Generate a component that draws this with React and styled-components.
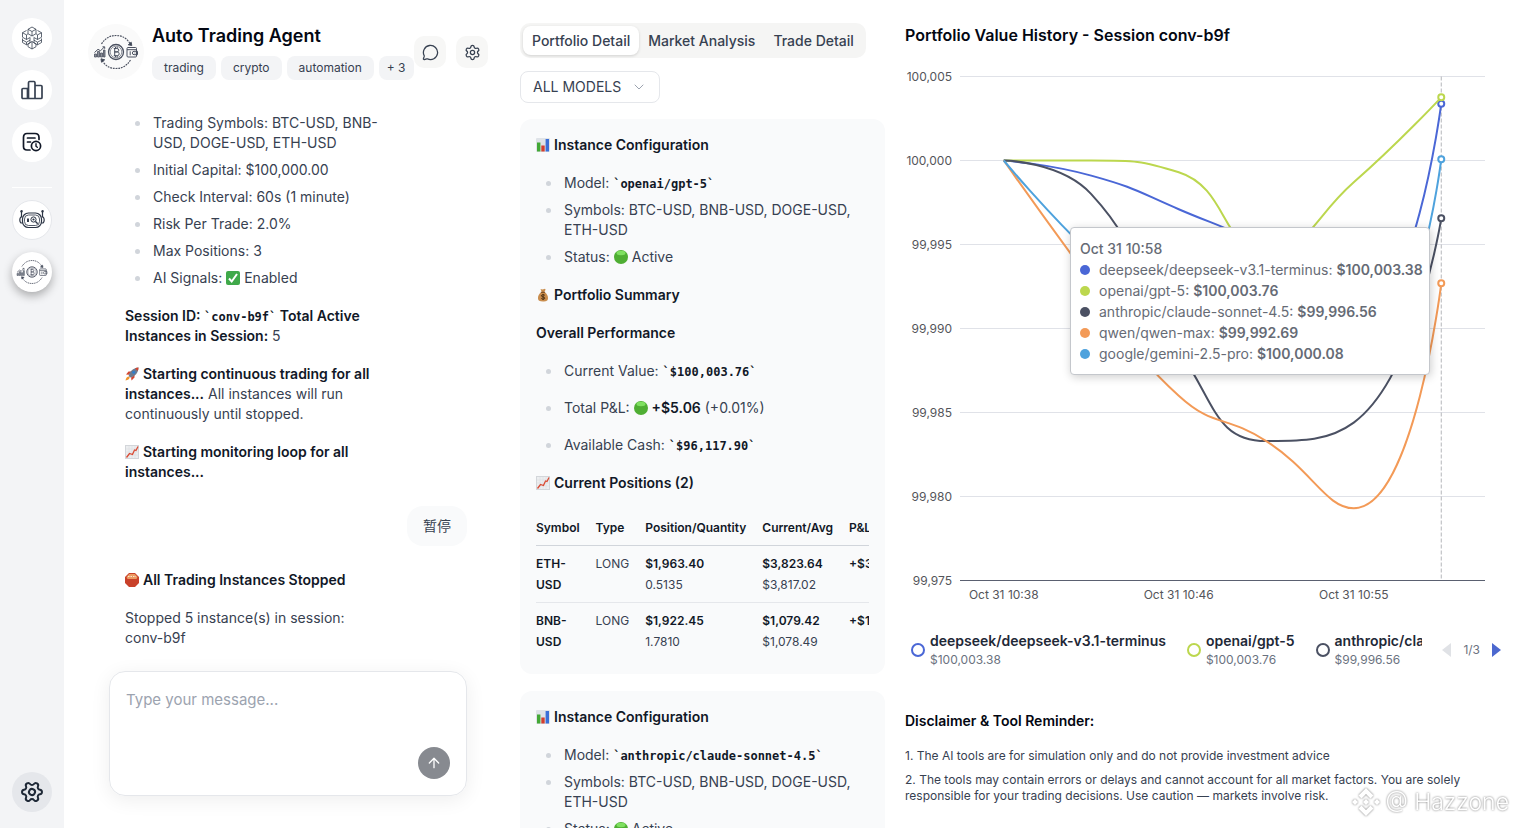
import { ArrowUp, ChevronDown, MessageCircle, Settings } from 'lucide-react';
import React, { useState } from 'react';
import styled, { createGlobalStyle } from 'styled-components';

const GlobalStyle = createGlobalStyle`
  * {
    box-sizing: border-box;
  }
  body {
    margin: 0;
    background: #ffffff;
    color: #374151;
    font-family: Inter, 'Noto Sans CJK SC', sans-serif;
    font-size: 14px;
    line-height: 20px;
  }
  button, select, textarea {
    font-family: inherit;
    color: inherit;
  }
  h1, h2, h3, p, ul {
    margin: 0;
    padding: 0;
  }
`;

const Page = styled.div`
  display: flex;
  height: 100vh;
  overflow: hidden;
`;

const Sidebar = styled.nav`
  display: flex;
  flex-direction: column;
  align-items: center;
  flex: none;
  width: 64px;
  padding: 18px 0 16px;
  background: #f3f4f6;
`;

const NavGroup = styled.div`
  display: flex;
  flex-direction: column;
  gap: 12px;
`;

const NavButton = styled.button`
  display: flex;
  align-items: center;
  justify-content: center;
  width: 40px;
  height: 40px;
  padding: 0;
  border: 1px solid ${(p) => p.$border || 'transparent'};
  border-radius: 50%;
  color: #1f2937;
  background: ${(p) => p.$background || '#ffffff'};
  box-shadow: ${(p) => (p.$active ? '0 4px 10px rgba(0, 0, 0, 0.3)' : 'none')};
`;

const NavCog = styled(Settings)`
  transform: rotate(30deg);
`;

const NavDivider = styled.hr`
  width: 40px;
  height: 1px;
  margin: 25px 0 12px;
  border: 0;
  background: #ffffff;
`;

const NavSpacer = styled.div`
  flex: 1;
`;

const Columns = styled.main`
  display: grid;
  flex: 1;
  grid-template-columns: minmax(0, 440fr) minmax(0, 381fr) minmax(0, 632fr);
  min-width: 0;
`;

const ChatColumn = styled.section`
  display: flex;
  flex-direction: column;
  min-height: 0;
`;

const ChatHeader = styled.header`
  display: flex;
  align-items: center;
  justify-content: space-between;
  padding: 24px 16px 0 24px;
`;

const AgentInfo = styled.div`
  display: flex;
  align-items: center;
  gap: 8px;
`;

const Avatar = styled.div`
  display: flex;
  align-items: center;
  justify-content: center;
  width: 56px;
  height: 56px;
  border-radius: 50%;
  background: #fafafa;
`;

const AgentName = styled.h1`
  color: #030712;
  font-size: 18px;
  font-weight: 600;
  line-height: 24px;
`;

const Tags = styled.div`
  display: flex;
  gap: 5px;
  margin-top: 8px;
`;

const Tag = styled.span`
  padding: 4px ${(p) => (p.$small ? '8px' : '12px')};
  border-radius: 8px;
  background: #f3f4f6;
  font-size: 12px;
  line-height: 16px;
  white-space: nowrap;
`;

const HeaderActions = styled.div`
  display: flex;
  gap: 10px;
`;

const IconButton = styled.button`
  display: flex;
  align-items: center;
  justify-content: center;
  width: 32px;
  height: 32px;
  padding: 0;
  border: 0;
  border-radius: 10px;
  background: #f7f7f6;
`;

const Messages = styled.div`
  flex: 1;
  min-height: 0;
  padding: 33px 37px 0 61px;
  overflow: hidden;
`;

const Markdown = styled.div`
  max-width: 254px;
`;

const Bullets = styled.ul`
  display: flex;
  flex-direction: column;
  gap: ${(p) => (p.$loose ? '17px' : '7px')};
  padding-left: 28px;
  list-style: none;
`;

const Bullet = styled.li`
  position: relative;
  &::before {
    content: '';
    position: absolute;
    top: 8px;
    left: -18px;
    width: 5px;
    height: 5px;
    border-radius: 50%;
    background: #d1d5db;
  }
`;

const Paragraph = styled.p`
  margin: 18px 0;
`;

const Strong = styled.strong`
  color: #111827;
  font-weight: 600;
`;

const Code = styled.code`
  color: #111827;
  font-family: 'DejaVu Sans Mono', monospace;
  font-size: 12px;
  font-weight: 700;
  line-height: 16px;
`;

const Emoji = styled.svg`
  width: 14px;
  height: 14px;
  margin-right: 4px;
  vertical-align: -2px;
`;

const UserMessage = styled.div`
  display: flex;
  justify-content: flex-end;
  margin: 24px 0;
`;

const Bubble = styled.div`
  padding: 10px 16px;
  border-radius: 16px;
  background: #f9fafb;
`;

const Composer = styled.form`
  display: flex;
  flex-direction: column;
  height: 125px;
  margin: 16px 37px 32px 45px;
  padding: 16px;
  border: 1px solid #e5e7eb;
  border-radius: 16px;
  box-shadow: 0 4px 20px rgba(0, 0, 0, 0.07);
`;

const ComposerInput = styled.textarea`
  flex: 1;
  width: 100%;
  padding: 0;
  border: 0;
  outline: none;
  resize: none;
  background: transparent;
  font-size: 15px;
  line-height: 24px;
  &::placeholder {
    color: #9ca3af;
  }
`;

const SendButton = styled.button`
  display: flex;
  align-items: center;
  align-self: flex-end;
  justify-content: center;
  width: 32px;
  height: 32px;
  padding: 0;
  border: 0;
  border-radius: 50%;
  color: #ffffff;
  background: #878a90;
`;

const DetailColumn = styled.section`
  display: flex;
  flex-direction: column;
  align-items: flex-start;
  min-height: 0;
  padding: 23px 0 0 16px;
  overflow: hidden;
`;

const TabList = styled.div`
  display: flex;
  flex: none;
  padding: 3px;
  border-radius: 10px;
  background: #f5f5f4;
`;

const Tab = styled.button`
  padding: 4px 9px;
  border: 0;
  border-radius: 8px;
  background: ${(p) => (p.$active ? '#ffffff' : 'transparent')};
  box-shadow: ${(p) => (p.$active ? '0 1px 3px rgba(0, 0, 0, 0.15)' : 'none')};
  font-size: 14px;
  font-weight: 500;
  line-height: 21px;
  white-space: nowrap;
`;

const SelectBox = styled.label`
  display: flex;
  flex: none;
  align-items: center;
  gap: 6px;
  height: 32px;
  margin: 13px 0 16px;
  padding: 0 12px;
  border: 1px solid #e5e7eb;
  border-radius: 8px;
  color: #9ca3af;
`;

const ModelSelect = styled.select`
  width: 92px;
  padding: 0;
  border: 0;
  outline: none;
  appearance: none;
  background: transparent;
  color: #374151;
  font-size: 14px;
  line-height: 20px;
`;

const Card = styled.article`
  flex: none;
  width: 100%;
  margin-bottom: 17px;
  padding: 16px 16px 14px;
  border-radius: 12px;
  background: #f9fafb;
`;

const CardHeading = styled.h3`
  margin: 18px 0;
  color: #111827;
  font-size: 14px;
  font-weight: 600;
  line-height: 20px;
  &:first-child {
    margin-top: 0;
  }
`;

const TableScroll = styled.div`
  margin-top: 24px;
  overflow: hidden;
`;

const Table = styled.table`
  border-collapse: collapse;
  font-size: 12px;
  line-height: 21px;
`;

const HeadCell = styled.th`
  padding: 0 8px 7px;
  border-bottom: 1px solid #d1d5db;
  color: #111827;
  font-weight: 600;
  text-align: left;
  white-space: nowrap;
  &:first-child {
    padding-left: 0;
  }
`;

const Cell = styled.td`
  padding: 7px 8px;
  border-bottom: 1px solid ${(p) => (p.$last ? 'transparent' : '#e5e7eb')};
  vertical-align: top;
  &:first-child {
    padding-left: 0;
  }
`;

const ChartColumn = styled.section`
  position: relative;
  min-width: 0;
  padding: 23px 16px 0 20px;
  overflow: hidden;
`;

const ChartTitle = styled.h2`
  color: #030712;
  font-size: 16px;
  font-weight: 600;
  line-height: 24px;
`;

const ChartArea = styled.div`
  position: relative;
  margin-top: 16px;
`;

const ChartSvg = styled.svg`
  display: block;
  width: 100%;
  overflow: visible;
`;

const AxisText = styled.text`
  fill: #54555a;
  font-size: 12px;
`;

const Tooltip = styled.div`
  position: absolute;
  top: 164px;
  left: 165px;
  display: flex;
  flex-direction: column;
  padding: 10px 6px 10px 9px;
  border: 1px solid #c4c7cc;
  border-radius: 4px;
  background: #ffffff;
  box-shadow: 1px 2px 10px rgba(0, 0, 0, 0.2);
  color: #666b75;
  font-size: 14px;
  line-height: 21px;
  white-space: nowrap;
`;

const TooltipRow = styled.div`
  display: flex;
  align-items: center;
`;

const Dot = styled.span`
  width: 10px;
  height: 10px;
  margin-right: 9px;
  border-radius: 50%;
  background: ${(p) => p.$color};
`;

const TooltipValue = styled.b`
  margin-left: 4px;
  font-weight: 600;
`;

const TooltipDate = styled.div`
  font-weight: 500;
`;

const Legend = styled.div`
  display: flex;
  align-items: center;
  gap: 20px;
  margin-top: 24px;
  padding-left: 6px;
`;

const LegendItems = styled.div`
  display: flex;
  flex: 1;
  gap: 21px;
  min-width: 0;
  overflow: hidden;
`;

const LegendItem = styled.div`
  display: flex;
  flex: none;
  align-items: center;
  gap: 5px;
`;

const LegendRing = styled.span`
  width: 14px;
  height: 14px;
  border: 2px solid ${(p) => p.$color};
  border-radius: 50%;
`;

const LegendName = styled.div`
  color: #1f2937;
  font-size: 14px;
  font-weight: 600;
  line-height: 20px;
`;

const LegendValue = styled.div`
  color: #6b7280;
  font-size: 12px;
  line-height: 18px;
`;

const Pager = styled.div`
  display: flex;
  align-items: center;
  gap: 12px;
  color: #6b7280;
  font-size: 12px;
`;

const PagerButton = styled.button`
  display: flex;
  padding: 0;
  border: 0;
  background: none;
  color: ${(p) => (p.disabled ? '#e0e2e6' : '#4c68cf')};
`;

const Disclaimer = styled.footer`
  margin-top: 42px;
  font-size: 12px;
  line-height: 16px;
`;

const DisclaimerTitle = styled.h3`
  margin-bottom: 17px;
  color: #030712;
  font-size: 14px;
  font-weight: 600;
  line-height: 20px;
`;

const DisclaimerLine = styled.p`
  margin-bottom: 8px;
`;

const Watermark = styled.div`
  position: absolute;
  right: 8px;
  bottom: 11px;
  display: flex;
  align-items: center;
  gap: 5px;
  color: #ffffff;
  filter: drop-shadow(0 0 1px rgba(0, 0, 0, 0.55));
  font-size: 23px;
  font-weight: 300;
  line-height: 30px;
`;

const series = [
  {
    name: 'deepseek/deepseek-v3.1-terminus',
    color: '#4a67d6',
    values: [100000, 99999.1, 99997.1, 99994.6, 99990.4, 100003.38],
  },
  {
    name: 'openai/gpt-5',
    color: '#bcd74e',
    values: [100000, 100000, 99999.3, 99994.6, 99998.7, 100003.76],
  },
  {
    name: 'anthropic/claude-sonnet-4.5',
    color: '#4b5163',
    values: [100000, 99998, 99988.7, 99983.3, 99984.4, 99996.56],
  },
  {
    name: 'qwen/qwen-max',
    color: '#f39a57',
    values: [100000, 99992.8, 99986, 99983.3, 99979.3, 99992.69],
  },
  {
    name: 'google/gemini-2.5-pro',
    color: '#4ea2dd',
    values: [100000, 99994.4, 99990, 99988, 99988, 100000.08],
  },
];

const money = (value) =>
  `$${value.toLocaleString('en-US', { minimumFractionDigits: 2 })}`;

const plot = { left: 55, right: 580, top: 13.5, bottom: 517.5 };
const ticks = [100005, 100000, 99995, 99990, 99985, 99980, 99975];
const labels = ['Oct 31 10:38', 'Oct 31 10:46', 'Oct 31 10:55'];

const xAt = (i) => plot.left + ((plot.right - plot.left) / 6) * (i + 0.5);
const yAt = (v) =>
  plot.top + ((100005 - v) / 30) * (plot.bottom - plot.top);

const clamp = (v, a, b) => Math.max(Math.min(a, b), Math.min(Math.max(a, b), v));

// bezier through all points, control points never leave the box of a segment
const smoothPath = (points) => {
  let d = `M${points[0][0]} ${points[0][1]}`;
  let out = points[0];
  for (let i = 1; i < points.length; i++) {
    const prev = points[i - 1];
    const cur = points[i];
    const next = points[i + 1];
    let cpIn = cur;
    let nextOut = cur;
    if (next) {
      const lenPrev = Math.hypot(cur[0] - prev[0], cur[1] - prev[1]);
      const lenNext = Math.hypot(next[0] - cur[0], next[1] - cur[1]);
      const ratio = lenNext / (lenNext + lenPrev);
      nextOut = cur.map((c, k) =>
        clamp(c + (next[k] - prev[k]) * 0.5 * ratio, c, next[k])
      );
      cpIn = cur.map((c, k) =>
        clamp(c - ((nextOut[k] - c) * lenPrev) / lenNext, prev[k], c)
      );
      nextOut = cur.map((c, k) => c + ((c - cpIn[k]) * lenNext) / lenPrev);
    }
    d += `C${out.join(' ')} ${cpIn.join(' ')} ${cur.join(' ')}`;
    out = nextOut;
  }
  return d;
};

const BarsEmoji = () => (
  <Emoji viewBox="0 0 14 14" role="img" aria-label="bar chart">
    <rect width="14" height="14" rx="1" fill="#dfe3e8" />
    <rect x="1" y="4.5" width="3.400" height="9" fill="#43a835" />
    <rect x="5.300" y="7.5" width="3.400" height="6" fill="#d23f2f" />
    <rect x="9.600" y="1" width="3.400" height="12.500" fill="#3a6fd8" />
  </Emoji>
);

const TrendEmoji = () => (
  <Emoji viewBox="0 0 14 14" role="img" aria-label="chart rising">
    <rect x="0.5" y="0.5" width="13" height="13" fill="#eceef0" stroke="#d3d6da" />
    <path d="M4 1v12M7 1v12M10 1v12M1 4h12M1 7h12M1 10h12" stroke="#d8dbdf" strokeWidth="0.5" />
    <path d="M1.5 12.5L4.5 8.5l3 1L9.5 5l1.500 .5L13 1.500" fill="none" stroke="#d94a33" strokeWidth="1.3" />
  </Emoji>
);

const CheckEmoji = () => (
  <Emoji viewBox="0 0 14 14" role="img" aria-label="enabled">
    <rect width="14" height="14" rx="2" fill="#3fa94a" />
    <path d="M3 7.500l2.700 3L11 3" fill="none" stroke="#fff" strokeWidth="2" />
  </Emoji>
);

const GreenEmoji = () => (
  <Emoji viewBox="0 0 14 14" role="img" aria-label="green">
    <circle cx="7" cy="7" r="7" fill="#4fae33" />
    <ellipse cx="7" cy="3" rx="4.500" ry="2.200" fill="#7fe060" />
  </Emoji>
);

const BagEmoji = () => (
  <Emoji viewBox="0 0 14 14" role="img" aria-label="money bag">
    <path d="M4.500 1l2 .6L9 .8l.6 1-1.300 2.200C11 5.500 12.300 8 12 10.500c-.3 2.200-1.500 3-5 3s-4.800-.8-5-3C1.700 8 3 5.500 5.700 4z" fill="#c98d4d" />
    <path d="M4.800 4.300h4.300" stroke="#6e4420" strokeWidth="1" />
    <path d="M8.800 7.300c-.8-1-3.400-.8-3.400.5 0 1.500 3.400.8 3.400 2.300 0 1.300-2.700 1.500-3.500.3M7.100 6v6" fill="none" stroke="#4a3015" strokeWidth="1" />
  </Emoji>
);

const RocketEmoji = () => (
  <Emoji viewBox="0 0 14 14" role="img" aria-label="rocket">
    <path d="M4 9.500c-2 0-3 1.500-3.500 4 2.500-.3 4-1.500 4.200-3.200z" fill="#f0952c" />
    <path d="M6.500 4.500H3.500L1 7.500l3 .3zM9.500 7.500v3l-3 3-.4-3z" fill="#d4452f" />
    <path d="M3.700 9c1-4.500 4-8 9.800-8.500C13.300 6 10 9.500 5.200 10.500z" fill="#6d7b8f" />
    <path d="M10 1.500c1-.6 2.200-.9 3.500-1 0 1.300-.3 2.500-.8 3.500z" fill="#d4452f" />
    <circle cx="8.700" cy="5.200" r="1.500" fill="#2f7fd0" />
  </Emoji>
);

const StopEmoji = () => (
  <Emoji viewBox="0 0 14 14" role="img" aria-label="stop">
    <path d="M4 0h6l4 4v6l-4 4H4l-4-4V4z" fill="#c9412a" />
    <path d="M4.200 1h5.600L12.500 4l-1 2h-9l-1-2z" fill="#eb9b62" />
    <path d="M3 3.500h8" stroke="#fbe3cf" strokeWidth="1" strokeDasharray="1.500 1" />
  </Emoji>
);

const LogoIcon = () => (
  <svg width="22" height="24" viewBox="0 0 22 24" fill="none" stroke="#374151" strokeWidth="0.8" strokeLinejoin="round">
    <path d="M11 1l4 2.300v4.400L11 10 7 7.700V3.300zM11 10V5.500M7 3.300l4 2.200 4-2.200" />
    <path d="M5.500 4.500l-4 2.200v4.500l4 2.300 4-2.300M1.500 6.700l4 2.200 1.500-1.200M5.500 8.900v4.600M16.500 4.500l4 2.200v4.500l-4 2.300-4-2.300M20.500 6.700l-4 2.200-1.500-1.200M16.500 8.900v4.600" />
    <path d="M1.500 12.500v4l4 2.300 3.500-2V12M20.500 12.500v4l-4 2.300-3.500-2V12M1.500 14l4 2.200 3.500-2M20.500 14l-4 2.200-3.500-2M5.500 16.200v2.600M16.500 16.200v2.600" />
    <path d="M7 18v2.700L11 23l4-2.300V18M11 15.500L7 18M11 15.500l4 2.500M11 15.500V23" />
  </svg>
);

const RankIcon = () => (
  <svg width="22" height="20" viewBox="0 0 22 20" fill="none" stroke="#374151" strokeWidth="1.700" strokeLinejoin="round">
    <path d="M1 9.500q0-1 1-1h4.500v10H2q-1 0-1-1zM7.500 18.500v-15q0-2 1-2h4.500q1 0 1 2v15zM14 5.500h6q1 0 1 1v11q0 1-1 1h-6M1 18.500h20" />
  </svg>
);

const HistoryIcon = () => (
  <svg width="20" height="20" viewBox="0 0 20 20" fill="none" stroke="#111827" strokeWidth="1.700" strokeLinecap="round">
    <path d="M8 18H5q-3.500 0-3.500-3.500v-9Q1.500 1.500 5 1.500h8q4 0 4 4v2M5.500 6h7.500M5.500 10h3" />
    <circle cx="14" cy="14" r="4.600" />
    <path d="M14 11.800v2.400l1.300 1" strokeWidth="1.400" />
  </svg>
);

const RobotIcon = () => (
  <svg width="26" height="20" viewBox="0 0 26 20" fill="none" stroke="#2b3444" strokeWidth="1.200">
    <rect x="3.500" y="3" width="19" height="14.500" rx="6" />
    <rect x="5.500" y="5" width="15" height="10.500" rx="4" strokeWidth="0.800" />
    <path d="M3.500 7H2Q.8 8 .8 10T2 13h1.500M22.500 7H24q1.200 1 1.200 3T24 13h-1.500M2.500 7V1.500M23.500 7V1.500" />
    <circle cx="2.500" cy="1.300" r="0.700" />
    <circle cx="23.500" cy="1.300" r="0.700" />
    <path d="M9 8.500v3.500" strokeWidth="1.900" />
    <circle cx="14.500" cy="9.500" r="2.600" strokeWidth="1" />
    <path d="M16.500 11.500l2.200 2.200" strokeWidth="1.400" />
    <circle cx="14.500" cy="9.500" r="0.500" />
  </svg>
);

const TradingIcon = ({ size }) => (
  <svg width={size} height={size} viewBox="0 0 46 46" fill="none" stroke="#4b5160" strokeWidth="1">
    <circle cx="23" cy="23" r="7.500" strokeWidth="1.300" />
    <circle cx="23" cy="23" r="5.800" strokeWidth="0.600" />
    <path d="M20.800 19.500h3q2 0 2 1.700t-2 1.700h-2.300 2.700q2 0 2 1.900t-2 1.900h-3.400M21.700 19.500v7.200M22.500 18v1.500M24.200 18v1.500M22.500 26.700v1.500M24.200 26.700v1.500" />
    <path d="M8.500 15C12.500 9 17 6.500 23 6.500S33.500 9 37 14.500M37.500 31C33.500 37 29 39.500 23 39.500S12.500 37 9.500 32" strokeWidth="1.200" strokeDasharray="1.800 0.900" />
    <path d="M38.800 16.500l-3.600-.7 3-2.600zM8 29.800l3.700 1-3.200 2.400z" fill="#374151" />
    <path d="M1.500 28v-3h2v3zM4.500 28v-5.500h2V28zM7.500 28v-4h2v4zM10.500 28v-7h1.500v7z" fill="#8b9099" strokeWidth="0.800" />
    <path d="M1.500 23.500l3.500-3.200 2.500 1.500 3.800-3.800M9.500 17.800h2.200v2" />
    <rect x="34" y="18.500" width="9.500" height="9.500" rx="1" />
    <path d="M34 20.700h9.500M44.500 22.300h-3.500q-1.600 0-1.600 1.700t1.600 1.700h3.500z" />
    <path d="M41.500 24h.9M37.200 22.300v4" />
  </svg>
);

const ChainMark = () => (
  <svg width="28" height="28" viewBox="0 0 28 28" fill="currentColor">
    <path d="M14 0l7.500 7.500-3 3L14 6l-4.500 4.500-3-3zM3 11l3 3-3 3-3-3zM14 11l3 3-3 3-3-3zM25 11l3 3-3 3-3-3zM14 28l-7.500-7.500 3-3L14 22l4.500-4.500 3 3z" />
  </svg>
);

const positions = [
  { symbol: 'ETH-USD', value: '$1,963.40', quantity: '0.5135', current: '$3,823.64', avg: '$3,817.02', pnl: '+$3.34' },
  { symbol: 'BNB-USD', value: '$1,922.45', quantity: '1.7810', current: '$1,079.42', avg: '$1,078.49', pnl: '+$1.66' },
];

const PositionRow = ({ symbol, value, quantity, current, avg, pnl, last }) => (
  <tr>
    <Cell $last={last}>
      <Strong>{symbol}</Strong>
    </Cell>
    <Cell $last={last}>LONG</Cell>
    <Cell $last={last}>
      <Strong>{value}</Strong>
      <br />
      {quantity}
    </Cell>
    <Cell $last={last}>
      <Strong>{current}</Strong>
      <br />
      {avg}
    </Cell>
    <Cell $last={last}>
      <Strong>{pnl}</Strong>
    </Cell>
  </tr>
);

const InstanceInfo = ({ model }) => (
  <>
    <CardHeading>
      <BarsEmoji />
      Instance Configuration
    </CardHeading>
    <Bullets>
      <Bullet>
        Model: <Code>`{model}`</Code>
      </Bullet>
      <Bullet>Symbols: BTC-USD, BNB-USD, DOGE-USD, ETH-USD</Bullet>
      <Bullet>
        Status: <GreenEmoji />
        Active
      </Bullet>
    </Bullets>
  </>
);

const Chart = () => (
  <ChartArea>
    <ChartSvg viewBox="0 0 596 544">
      {ticks.map((tick) => (
        <g key={tick}>
          <path
            d={`M${plot.left} ${yAt(tick)}H${plot.right}`}
            stroke={tick === 99975 ? '#5a6070' : '#e0e2e8'}
          />
          <AxisText x="47" y={yAt(tick) + 4} textAnchor="end">
            {tick.toLocaleString('en-US')}
          </AxisText>
        </g>
      ))}
      {labels.map((label, i) => (
        <AxisText key={label} x={xAt(i * 2)} y="536" textAnchor="middle">
          {label}
        </AxisText>
      ))}
      <path
        d={`M${xAt(5)} ${plot.top}V${plot.bottom}`}
        stroke="#b4b6bb"
        strokeDasharray="4 2"
      />
      {series.map(({ name, color, values }) => (
        <g key={name} fill="none" stroke={color} strokeWidth="2">
          <path d={smoothPath(values.map((v, i) => [xAt(i), yAt(v)]))} />
          <circle cx={xAt(5)} cy={yAt(values[5])} r="3" fill="#ffffff" />
        </g>
      ))}
    </ChartSvg>
    <Tooltip>
      <TooltipDate>Oct 31 10:58</TooltipDate>
      {series.map(({ name, color, values }) => (
        <TooltipRow key={name}>
          <Dot $color={color} />
          {name}: <TooltipValue>{money(values[5])}</TooltipValue>
        </TooltipRow>
      ))}
    </Tooltip>
  </ChartArea>
);

const tabs = ['Portfolio Detail', 'Market Analysis', 'Trade Detail'];

const App = () => {
  const [tab, setTab] = useState(tabs[0]);
  const [message, setMessage] = useState('');

  return (
    <Page>
      <GlobalStyle />
      <Sidebar>
        <NavGroup>
          <NavButton aria-label="Home"><LogoIcon /></NavButton>
          <NavButton aria-label="Ranking"><RankIcon /></NavButton>
          <NavButton aria-label="History"><HistoryIcon /></NavButton>
        </NavGroup>
        <NavDivider />
        <NavGroup>
          <NavButton aria-label="Research agent" $border="#e5e7eb"><RobotIcon /></NavButton>
          <NavButton aria-label="Trading agent" $active><TradingIcon size={32} /></NavButton>
        </NavGroup>
        <NavSpacer />
        <NavButton aria-label="Settings" $background="#e5e7eb">
          <NavCog size={24} strokeWidth={2} />
        </NavButton>
      </Sidebar>
      <Columns>
        <ChatColumn>
          <ChatHeader>
            <AgentInfo>
              <Avatar><TradingIcon size={46} /></Avatar>
              <div>
                <AgentName>Auto Trading Agent</AgentName>
                <Tags>
                  <Tag>trading</Tag>
                  <Tag>crypto</Tag>
                  <Tag>automation</Tag>
                  <Tag $small>+ 3</Tag>
                </Tags>
              </div>
            </AgentInfo>
            <HeaderActions>
              <IconButton aria-label="New chat"><MessageCircle size={17} strokeWidth={1.8} /></IconButton>
              <IconButton aria-label="Agent settings"><Settings size={17} strokeWidth={1.8} /></IconButton>
            </HeaderActions>
          </ChatHeader>
          <Messages>
            <Markdown>
              <Bullets>
                <Bullet>Trading Symbols: BTC-USD, BNB-USD, DOGE-USD, ETH-USD</Bullet>
                <Bullet>Initial Capital: $100,000.00</Bullet>
                <Bullet>Check Interval: 60s (1 minute)</Bullet>
                <Bullet>Risk Per Trade: 2.0%</Bullet>
                <Bullet>Max Positions: 3</Bullet>
                <Bullet>AI Signals: <CheckEmoji />Enabled</Bullet>
              </Bullets>
              <Paragraph>
                <Strong>Session ID: <Code>`conv-b9f`</Code> Total Active Instances in Session:</Strong> 5
              </Paragraph>
              <Paragraph>
                <RocketEmoji />
                <Strong>Starting continuous trading for all instances...</Strong> All
                instances will run continuously until stopped.
              </Paragraph>
              <Paragraph>
                <TrendEmoji />
                <Strong>Starting monitoring loop for all instances...</Strong>
              </Paragraph>
            </Markdown>
            <UserMessage>
              <Bubble>暂停</Bubble>
            </UserMessage>
            <Markdown>
              <Paragraph>
                <StopEmoji />
                <Strong>All Trading Instances Stopped</Strong>
              </Paragraph>
              <Paragraph>Stopped 5 instance(s) in session: conv-b9f</Paragraph>
            </Markdown>
          </Messages>
          <Composer onSubmit={(e) => e.preventDefault()}>
            <ComposerInput
              aria-label="Message"
              placeholder="Type your message..."
              value={message}
              onChange={(e) => setMessage(e.target.value)}
            />
            <SendButton aria-label="Send"><ArrowUp size={16} /></SendButton>
          </Composer>
        </ChatColumn>
        <DetailColumn>
          <TabList role="tablist">
            {tabs.map((name) => (
              <Tab
                key={name}
                role="tab"
                aria-selected={tab === name}
                $active={tab === name}
                onClick={() => setTab(name)}
              >
                {name}
              </Tab>
            ))}
          </TabList>
          <SelectBox>
            <ModelSelect aria-label="Model">
              <option>ALL MODELS</option>
            </ModelSelect>
            <ChevronDown size={16} strokeWidth={1.5} />
          </SelectBox>
          <Card>
            <InstanceInfo model="openai/gpt-5" />
            <CardHeading>
              <BagEmoji />
              Portfolio Summary
            </CardHeading>
            <CardHeading>Overall Performance</CardHeading>
            <Bullets $loose>
              <Bullet>Current Value: <Code>`$100,003.76`</Code></Bullet>
              <Bullet>
                Total P&amp;L: <GreenEmoji />
                <Strong>+$5.06</Strong> (+0.01%)
              </Bullet>
              <Bullet>Available Cash: <Code>`$96,117.90`</Code></Bullet>
            </Bullets>
            <CardHeading>
              <TrendEmoji />
              Current Positions (2)
            </CardHeading>
            <TableScroll>
              <Table>
                <thead>
                  <tr>
                    <HeadCell>Symbol</HeadCell>
                    <HeadCell>Type</HeadCell>
                    <HeadCell>Position/Quantity</HeadCell>
                    <HeadCell>Current/Avg</HeadCell>
                    <HeadCell>P&amp;L</HeadCell>
                  </tr>
                </thead>
                <tbody>
                  {positions.map((position, i) => (
                    <PositionRow
                      {...position}
                      key={position.symbol}
                      last={i === positions.length - 1}
                    />
                  ))}
                </tbody>
              </Table>
            </TableScroll>
          </Card>
          <Card>
            <InstanceInfo model="anthropic/claude-sonnet-4.5" />
          </Card>
        </DetailColumn>
        <ChartColumn>
          <ChartTitle>Portfolio Value History - Session conv-b9f</ChartTitle>
          <Chart />
          <Legend>
            <LegendItems>
              {series.slice(0, 3).map(({ name, color, values }) => (
                <LegendItem key={name}>
                  <LegendRing $color={color} />
                  <div>
                    <LegendName>{name}</LegendName>
                    <LegendValue>{money(values[5])}</LegendValue>
                  </div>
                </LegendItem>
              ))}
            </LegendItems>
            <Pager>
              <PagerButton aria-label="Previous" disabled>
                <svg width="9" height="16" fill="currentColor"><path d="M9 1v14L0 8z" /></svg>
              </PagerButton>
              1/3
              <PagerButton aria-label="Next">
                <svg width="9" height="16" fill="currentColor"><path d="M0 1v14l9-7z" /></svg>
              </PagerButton>
            </Pager>
          </Legend>
          <Disclaimer>
            <DisclaimerTitle>Disclaimer &amp; Tool Reminder:</DisclaimerTitle>
            <DisclaimerLine>
              1. The AI tools are for simulation only and do not provide investment advice
            </DisclaimerLine>
            <DisclaimerLine>
              2. The tools may contain errors or delays and cannot account for all market factors. You are solely
              responsible for your trading decisions. Use caution — markets involve risk.
            </DisclaimerLine>
          </Disclaimer>
          <Watermark>
            <ChainMark />
            @ Hazzone
          </Watermark>
        </ChartColumn>
      </Columns>
    </Page>
  );
};

export default App;
